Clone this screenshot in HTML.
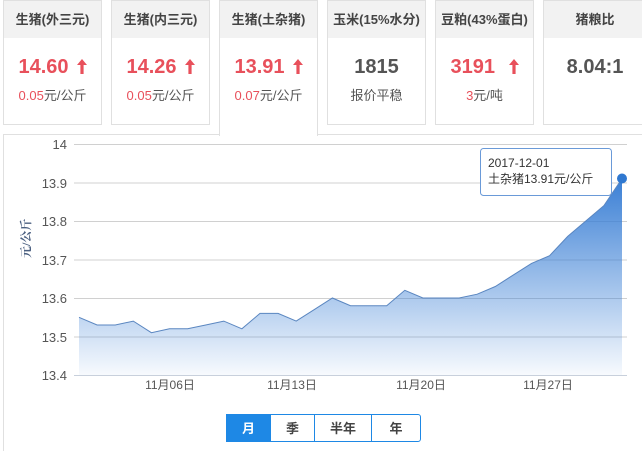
<!DOCTYPE html>
<html><head><meta charset="utf-8"><style>
*{margin:0;padding:0;box-sizing:border-box}
html,body{width:642px;height:451px;overflow:hidden}
body{background:#fff;font-family:"Liberation Sans","Noto Sans CJK SC",sans-serif;position:relative}
.card{position:absolute;top:0;height:125px;border:1px solid #e0e0e0;background:#fff;text-align:center}
.card .h{height:37px;background:#f2f2f2;line-height:37px;font-size:13px;font-weight:bold;color:#444}
.card .v{margin-top:15px;font-size:20px;font-weight:bold;color:#555;height:28px;line-height:28px}
.card .v.r{color:#e8505b}
.card .s{font-size:13px;color:#555;margin-top:4px}
.card .s b{font-weight:normal;color:#e8505b}
.arr{display:inline-block;margin-left:8px;vertical-align:-1px}
.active{height:136px;border-bottom:none;z-index:2}
.panel{position:absolute;left:3px;top:134px;width:650px;height:330px;border:1px solid #e0e0e0;background:#fff}
.btn{position:absolute;top:414px;height:28px;line-height:28px;text-align:center;font-size:13px;font-weight:bold;color:#444;border:1px solid #1e88e5;background:#fff}
</style></head><body>
<div class="card" style="left:3px;width:99px"><div class="h">生猪(外三元)</div><div class="v r">14.60<svg class="arr" width="10" height="15" viewBox="0 0 10 15"><path d="M5 0 L10 6 L6.6 6 L6.6 15 L3.4 15 L3.4 6 L0 6 Z" fill="#e8505b"/></svg></div><div class="s"><b>0.05</b>元/公斤</div></div>
<div class="card" style="left:111px;width:99px"><div class="h">生猪(内三元)</div><div class="v r">14.26<svg class="arr" width="10" height="15" viewBox="0 0 10 15"><path d="M5 0 L10 6 L6.6 6 L6.6 15 L3.4 15 L3.4 6 L0 6 Z" fill="#e8505b"/></svg></div><div class="s"><b>0.05</b>元/公斤</div></div>
<div class="card active" style="left:219px;width:99px"><div class="h">生猪(土杂猪)</div><div class="v r">13.91<svg class="arr" width="10" height="15" viewBox="0 0 10 15"><path d="M5 0 L10 6 L6.6 6 L6.6 15 L3.4 15 L3.4 6 L0 6 Z" fill="#e8505b"/></svg></div><div class="s"><b>0.07</b>元/公斤</div></div>
<div class="card" style="left:327px;width:99px"><div class="h">玉米(15%水分)</div><div class="v">1815</div><div class="s">报价平稳</div></div>
<div class="card" style="left:435px;width:99px"><div class="h">豆粕(43%蛋白)</div><div class="v r">3191 <svg class="arr" width="10" height="15" viewBox="0 0 10 15"><path d="M5 0 L10 6 L6.6 6 L6.6 15 L3.4 15 L3.4 6 L0 6 Z" fill="#e8505b"/></svg></div><div class="s"><b>3</b>元/吨</div></div>
<div class="card" style="left:543px;width:104px"><div class="h">猪粮比</div><div class="v">8.04:1</div></div>
<div class="panel"></div>
<svg style="position:absolute;left:0;top:0;z-index:3" width="642" height="451">
<defs><linearGradient id="g" gradientUnits="userSpaceOnUse" x1="0" y1="178" x2="0" y2="375"><stop offset="0" stop-color="#3a7fd5"/><stop offset="1" stop-color="#3a7fd5" stop-opacity="0.04"/></linearGradient></defs>
<g stroke="#d0d0d0" stroke-width="1">
<line x1="74" x2="627" y1="144.5" y2="144.5"/><line x1="74" x2="627" y1="183" y2="183"/><line x1="74" x2="627" y1="221.5" y2="221.5"/><line x1="74" x2="627" y1="260" y2="260"/><line x1="74" x2="627" y1="298.5" y2="298.5"/><line x1="74" x2="627" y1="337" y2="337"/><line x1="74" x2="627" y1="375.5" y2="375.5" stroke="#c8d0dc"/>
</g>
<g font-size="13" fill="#555" text-anchor="end" font-family="Liberation Sans, sans-serif">
<text x="67" y="149">14</text><text x="67" y="188">13.9</text><text x="67" y="226">13.8</text><text x="67" y="265">13.7</text><text x="67" y="303">13.6</text><text x="67" y="342">13.5</text><text x="67" y="380">13.4</text>
</g>
<text transform="translate(30,258) rotate(-90)" font-size="12" font-weight="bold" fill="#4a5f80" font-family="Liberation Serif, Noto Serif CJK SC, serif">元/公斤</text>
<g font-size="12" fill="#555" text-anchor="middle"><text x="170" y="389">11月06日</text><text x="292" y="389">11月13日</text><text x="421" y="389">11月20日</text><text x="548" y="389">11月27日</text></g>
<path d="M79,317.3 L97.1,325 115.2,325 133.3,321.1 151.4,332.7 169.5,328.8 187.6,328.8 205.7,325 223.8,321.1 241.9,328.8 260,313.4 278.1,313.4 296.2,321.1 314.3,309.6 332.4,298 350.5,305.7 368.6,305.7 386.7,305.7 404.8,290.3 422.9,298 441,298 459.1,298 477.2,294.2 495.3,286.5 513.4,274.9 531.5,263.4 549.6,255.7 567.7,236.4 585.8,221 603.9,205.6 622,178.7 L622,375 L79,375 Z" fill="url(#g)"/>
<path d="M79,317.3 L97.1,325 115.2,325 133.3,321.1 151.4,332.7 169.5,328.8 187.6,328.8 205.7,325 223.8,321.1 241.9,328.8 260,313.4 278.1,313.4 296.2,321.1 314.3,309.6 332.4,298 350.5,305.7 368.6,305.7 386.7,305.7 404.8,290.3 422.9,298 441,298 459.1,298 477.2,294.2 495.3,286.5 513.4,274.9 531.5,263.4 549.6,255.7 567.7,236.4 585.8,221 603.9,205.6 622,178.7" fill="none" stroke="#5a86c0" stroke-width="1"/>
<circle cx="622" cy="178.5" r="5" fill="#2f78d0"/>
<rect x="480.5" y="148.5" width="131" height="47" rx="3" fill="#fff" stroke="#6a9ad8"/>
<text x="488" y="167" font-size="12" fill="#333">2017-12-01</text>
<text x="488" y="183" font-size="12" fill="#333">土杂猪13.91元/公斤</text>
</svg>
<div class="btn" style="left:226px;width:45px;background:#1e88e5;color:#fff">月</div>
<div class="btn" style="left:270px;width:45px">季</div>
<div class="btn" style="left:314px;width:58px">半年</div>
<div class="btn" style="left:371px;width:50px;border-radius:0 3px 3px 0">年</div>
</body></html>
